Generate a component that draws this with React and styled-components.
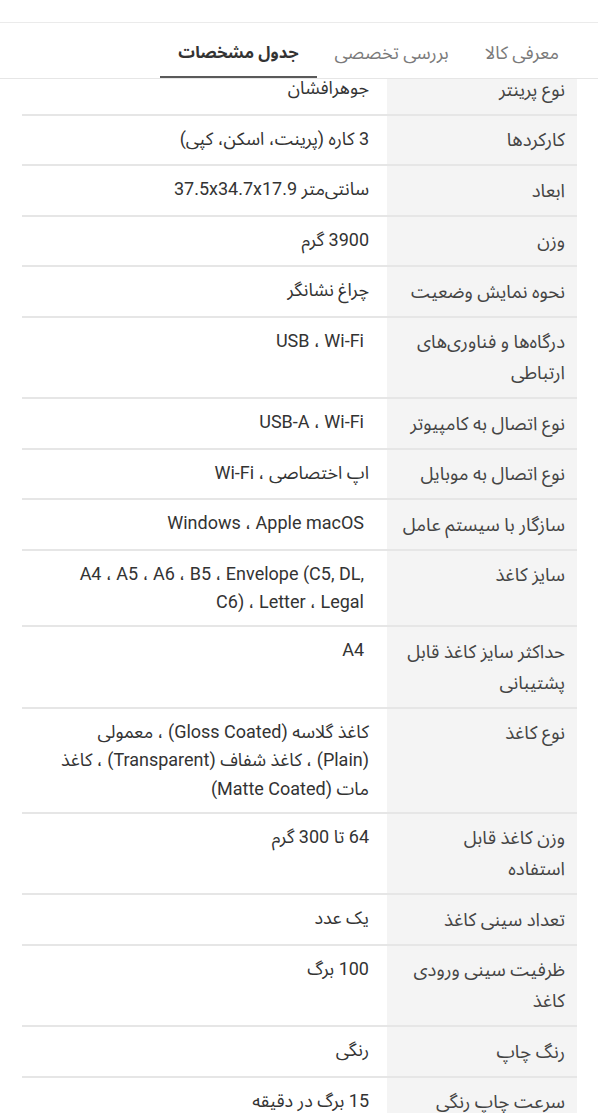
import React from "react";
import styled, { createGlobalStyle } from "styled-components";

const specs = [
  ["نوع پرینتر", "جوهرافشان"],
  ["کارکردها", "3 کاره (پرینت، اسکن، کپی)"],
  ["ابعاد", "سانتی‌متر 37.5x34.7x17.9"],
  ["وزن", "3900 گرم"],
  ["نحوه نمایش وضعیت", "چراغ نشانگر"],
  ["درگاه‌ها و فناوری‌های ارتباطی", "USB ، Wi-Fi", true],
  ["نوع اتصال به کامپیوتر", "USB-A ، Wi-Fi", true],
  ["نوع اتصال به موبایل", "اپ اختصاصی ، Wi-Fi"],
  ["سازگار با سیستم عامل", "Windows ، Apple macOS", true],
  ["سایز کاغذ", "A4 ، A5 ، A6 ، B5 ، Envelope (C5, DL, C6) ، Letter ، Legal", true],
  ["حداکثر سایز کاغذ قابل پشتیبانی", "A4", true],
  [
    "نوع کاغذ",
    "کاغذ گلاسه (Gloss Coated) ، معمولی (Plain) ، کاغذ شفاف (Transparent) ، کاغذ مات (Matte Coated)",
  ],
  ["وزن کاغذ قابل\nاستفاده", "64 تا 300 گرم"],
  ["تعداد سینی کاغذ", "یک عدد"],
  ["ظرفیت سینی ورودی کاغذ", "100 برگ"],
  ["رنگ چاپ", "رنگی"],
  ["سرعت چاپ رنگی", "15 برگ در دقیقه"],
];

const tabs = ["معرفی کالا", "بررسی تخصصی", "جدول مشخصات"];

function App() {
  return (
    <>
      <GlobalStyle />
      <Spage dir="rtl">
        <Sheader>
          <StopStrip />
          <StabBar>
            {tabs.map((t, i) => (
              <Stab key={t} $active={i === 2}>
                {t}
              </Stab>
            ))}
          </StabBar>
        </Sheader>
        <Stable>
          {specs.map(([label, value, latin]) => (
            <Srow key={label}>
              <Slabel>{label}</Slabel>
              <Svalue $latin={latin}>{value}</Svalue>
            </Srow>
          ))}
        </Stable>
      </Spage>
    </>
  );
}

const GlobalStyle = createGlobalStyle`
  body {
    margin: 0;
    background: #fff;
    font-family: Roboto, "Noto Sans Arabic", "DejaVu Sans", sans-serif;
  }
`;

const Spage = styled.div`
  background: #fff;
  overflow: hidden;
`;

const Sheader = styled.header`
  position: relative;
  z-index: 2;
  background: #fff;
`;

const StopStrip = styled.div`
  height: 22px;
  border-bottom: 1px solid #ebebeb;
`;

const StabBar = styled.nav`
  display: flex;
  align-items: stretch;
  height: 55px;
  padding-right: 21px;
  border-bottom: 1px solid #e6e6e6;
`;

const Stab = styled.div`
  display: flex;
  align-items: center;
  padding: 6px 18px 0;
  font-size: ${(p) => (p.$active ? "16.5px" : "18px")};
  color: ${(p) => (p.$active ? "#333" : "#7a7a7a")};
  font-weight: ${(p) => (p.$active ? 700 : 400)};
  border-bottom: 2px solid ${(p) => (p.$active ? "#5a5a5a" : "transparent")};
`;

const Stable = styled.div`
  margin: -14px 21px 0 22px;
`;

const Srow = styled.div`
  display: grid;
  grid-template-columns: 190px 1fr;
  border-bottom: 2px solid #e6e6e6;
`;

const Slabel = styled.div`
  background: #f4f4f4;
  padding: 9.5px 12px 8px 8px;
  font-size: 18.5px;
  line-height: 31px;
  color: #444;
  white-space: pre-line;
`;

const Svalue = styled.div`
  padding: 9px ${(p) => (p.$latin ? "23px" : "18px")} 8.5px 30px;
  font-size: 18px;
  line-height: 28.5px;
  color: #333;
`;

export default App;
